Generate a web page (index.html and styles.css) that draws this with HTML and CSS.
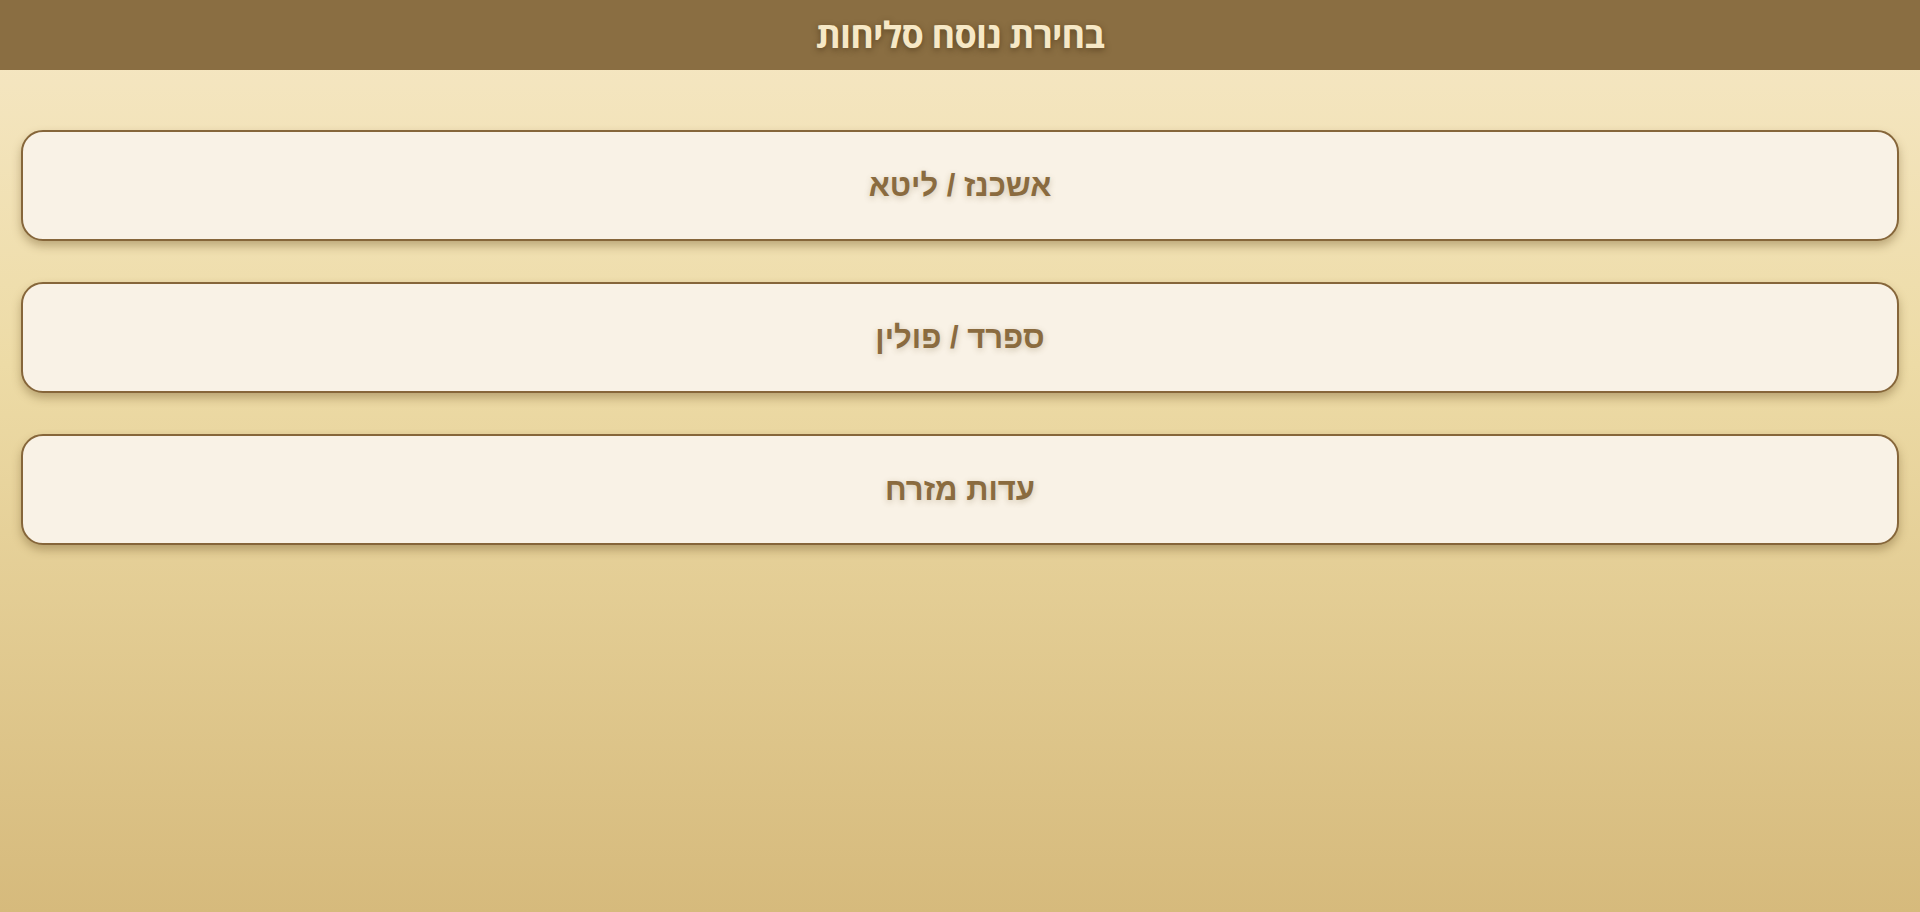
FILE: index.html
```html
<!DOCTYPE html>
<html lang="he" dir="rtl">
<head>
<meta charset="utf-8">
<title>בחירת נוסח סליחות</title>
<link rel="stylesheet" href="styles.css">
</head>
<body>
<header class="topbar">
  <h1 class="title">בחירת נוסח סליחות</h1>
</header>
<main class="list">
  <button class="choice">אשכנז / ליטא</button>
  <button class="choice">ספרד / פולין</button>
  <button class="choice">עדות מזרח</button>
</main>
</body>
</html>
```
FILE: styles.css
```css
html, body {
  margin: 0;
  padding: 0;
  height: 100%;
}
body {
  background: linear-gradient(180deg, #f6e8c6 0%, #eddba6 40%, #d6ba7c 100%);
  min-height: 912px;
  font-family: "Liberation Sans", "DejaVu Sans", sans-serif;
}
.topbar {
  height: 70px;
  background: #8a6e42;
  display: flex;
  align-items: center;
  justify-content: center;
}
.title {
  margin: 0 0 2px;
  font-family: "Open Sans", "Liberation Sans", sans-serif;
  font-size: 36px;
  font-weight: 700;
  color: #f6e8c6;
  text-shadow: 0 2px 6px rgba(60, 40, 15, 0.55);
  letter-spacing: -0.8px;
}
.list {
  display: flex;
  flex-direction: column;
  gap: 41px;
  padding: 60px 21px 0;
}
.choice {
  height: 111px;
  border: 2px solid #86663a;
  border-radius: 22px;
  background: #f9f2e6;
  box-shadow: 0 5px 10px rgba(110, 85, 40, 0.4);
  font-family: "Liberation Sans", "DejaVu Sans", sans-serif;
  font-size: 31px;
  font-weight: 700;
  color: #8a6b3f;
  text-shadow: 0 2px 6px rgba(110, 85, 40, 0.3);
  cursor: pointer;
}
```
